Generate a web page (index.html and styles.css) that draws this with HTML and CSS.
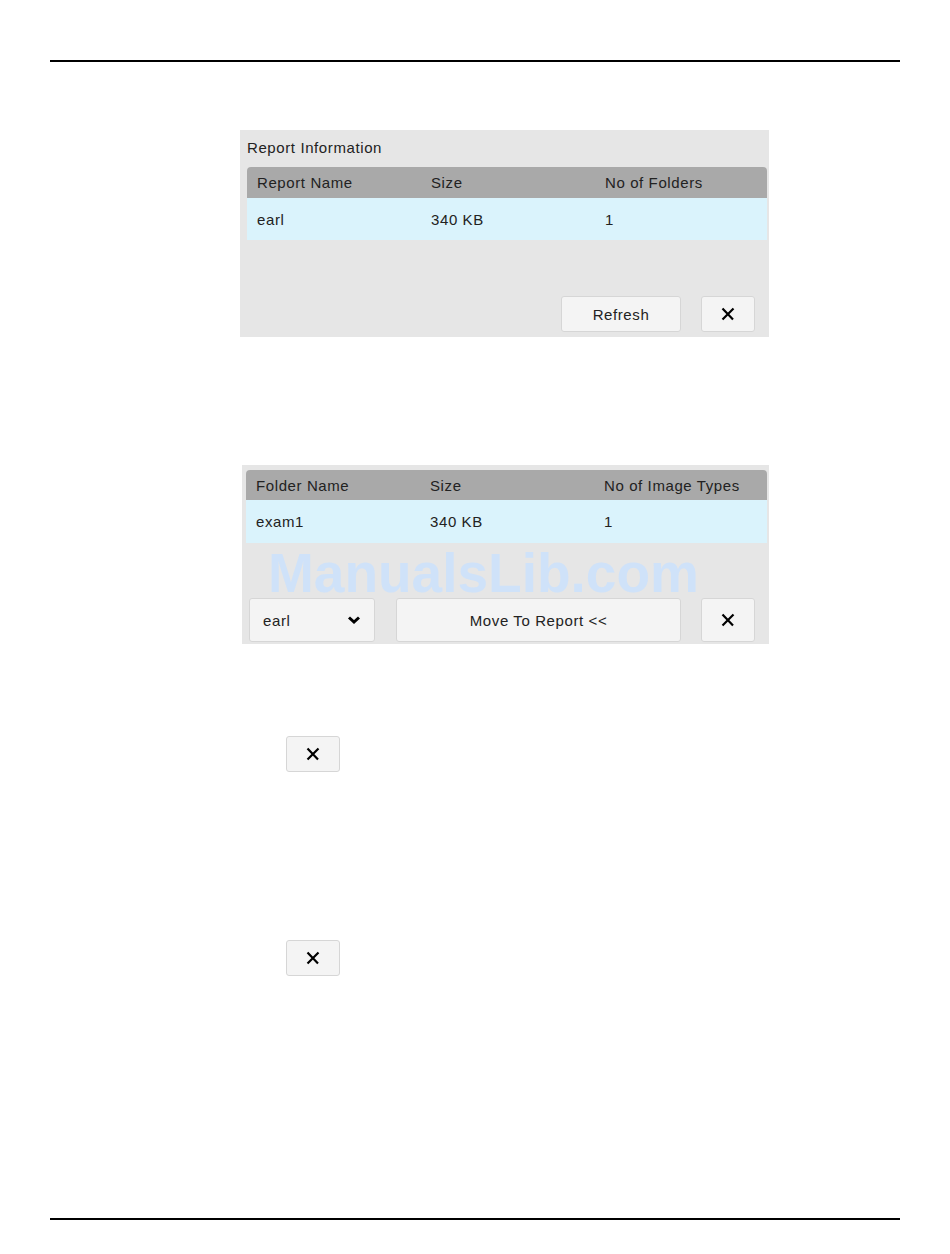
FILE: index.html
```html
<!DOCTYPE html>
<html lang="en">
    <head>
        <meta charset="UTF-8">
        <meta name="viewport" content="width=device-width, initial-scale=1.0">
        <link rel="stylesheet" href="styles.css">
        <title>Report Information</title>
    </head>
    <body>
        <div class="page">
            <hr class="rule rule-top">

            <div class="panel report-panel">
                <div class="panel-title">Report Information</div>
                <div class="grid">
                    <div class="grid-head">
                        <span>Report Name</span>
                        <span>Size</span>
                        <span>No of Folders</span>
                    </div>
                    <div class="grid-row">
                        <span>earl</span>
                        <span>340 KB</span>
                        <span>1</span>
                    </div>
                </div>
                <div class="actions report-actions">
                    <button class="btn btn-refresh" type="button">Refresh</button>
                    <button class="btn btn-close" type="button">
                        <svg width="14" height="14" viewBox="0 0 14 14"><path d="M1.5 1.5 L12 12.5 M12.5 1.5 L1.5 12.5" stroke="#000" stroke-width="2.2" fill="none"/></svg>
                    </button>
                </div>
            </div>

            <div class="panel folder-panel">
                <div class="grid">
                    <div class="grid-head">
                        <span>Folder Name</span>
                        <span>Size</span>
                        <span>No of Image Types</span>
                    </div>
                    <div class="grid-row">
                        <span>exam1</span>
                        <span>340 KB</span>
                        <span>1</span>
                    </div>
                </div>
                <div class="watermark">ManualsLib.com</div>
                <div class="actions folder-actions">
                    <div class="select">
                        <span>earl</span>
                        <svg width="14" height="10" viewBox="0 0 14 10"><path d="M2 2.5 L7 7 L12 2.5" stroke="#000" stroke-width="3" fill="none"/></svg>
                    </div>
                    <button class="btn btn-move" type="button">Move To Report &lt;&lt;</button>
                    <button class="btn btn-close" type="button">
                        <svg width="14" height="14" viewBox="0 0 14 14"><path d="M1.5 1.5 L12 12.5 M12.5 1.5 L1.5 12.5" stroke="#000" stroke-width="2.2" fill="none"/></svg>
                    </button>
                </div>
            </div>

            <button class="btn btn-close solo solo-first" type="button">
                <svg width="14" height="14" viewBox="0 0 14 14"><path d="M1.5 1.5 L12 12.5 M12.5 1.5 L1.5 12.5" stroke="#000" stroke-width="2.2" fill="none"/></svg>
            </button>
            <button class="btn btn-close solo solo-second" type="button">
                <svg width="14" height="14" viewBox="0 0 14 14"><path d="M1.5 1.5 L12 12.5 M12.5 1.5 L1.5 12.5" stroke="#000" stroke-width="2.2" fill="none"/></svg>
            </button>

            <hr class="rule rule-bottom">
        </div>
    </body>
</html>
```

FILE: styles.css
```css
body {
    font-family: 'Liberation Sans', Arial, sans-serif;
    font-size: 15px;
    letter-spacing: 0.6px;
    color: #222;
    background: #fff;
    margin: 0;
}

.page {
    width: 950px;
    padding-top: 60px;
    display: flex;
    flex-direction: column;
}

.rule {
    margin: 0 50px;
    height: 2px;
    border: none;
    background: #000;
}

.rule-bottom {
    margin-top: 242px;
}

.panel {
    background: #e6e6e6;
    box-sizing: border-box;
    position: relative;
}

.report-panel {
    margin: 68px 0 0 240px;
    width: 529px;
    padding: 0 2px 5px 7px;
}

.panel-title {
    padding-top: 8px;
    line-height: 20px;
    margin-bottom: 9px;
}

.grid-head,
.grid-row {
    display: grid;
    grid-template-columns: 174px 174px 1fr;
    padding-left: 10px;
    align-items: center;
}

.grid-head {
    background: #a9a9a9;
    height: 31px;
    border-radius: 4px 4px 0 0;
}

.grid-row {
    background: #daf3fc;
    height: 42px;
}

.folder-panel .grid-head {
    height: 30px;
}

.folder-panel .grid-row {
    height: 43px;
}

.actions {
    display: flex;
    align-items: center;
    justify-content: flex-end;
    gap: 20px;
    padding-right: 12px;
}

.report-actions {
    margin-top: 56px;
}

.btn {
    font-family: inherit;
    font-size: 15px;
    letter-spacing: 0.6px;
    color: #222;
    background: #f4f4f4;
    border: 1px solid #d6d6d6;
    border-radius: 3px;
    box-sizing: border-box;
    height: 36px;
    padding: 0;
    display: flex;
    align-items: center;
    justify-content: center;
}

.btn-refresh {
    width: 120px;
}

.btn-close {
    width: 54px;
}

.folder-panel {
    margin: 128px 0 0 242px;
    width: 527px;
    padding: 5px 2px 2px 4px;
}

.folder-actions {
    margin-top: 55px;
    padding-left: 3px;
    justify-content: flex-start;
}

.folder-actions .btn {
    height: 44px;
}

.folder-actions .btn-move {
    width: 285px;
    margin-left: 1px;
}

.folder-actions .btn-close {
    margin-left: auto;
}

.select {
    width: 126px;
    height: 44px;
    box-sizing: border-box;
    background: #f4f4f4;
    border: 1px solid #d6d6d6;
    border-radius: 3px;
    display: flex;
    align-items: center;
    justify-content: space-between;
    padding: 0 13px 0 13px;
}

.watermark {
    position: absolute;
    left: 26px;
    top: 76px;
    font-size: 55px;
    font-weight: bold;
    letter-spacing: 0;
    color: #cfe2f9;
    line-height: 64px;
}

.solo {
    margin-left: 286px;
}

.solo-first {
    margin-top: 92px;
}

.solo-second {
    margin-top: 168px;
}
```
